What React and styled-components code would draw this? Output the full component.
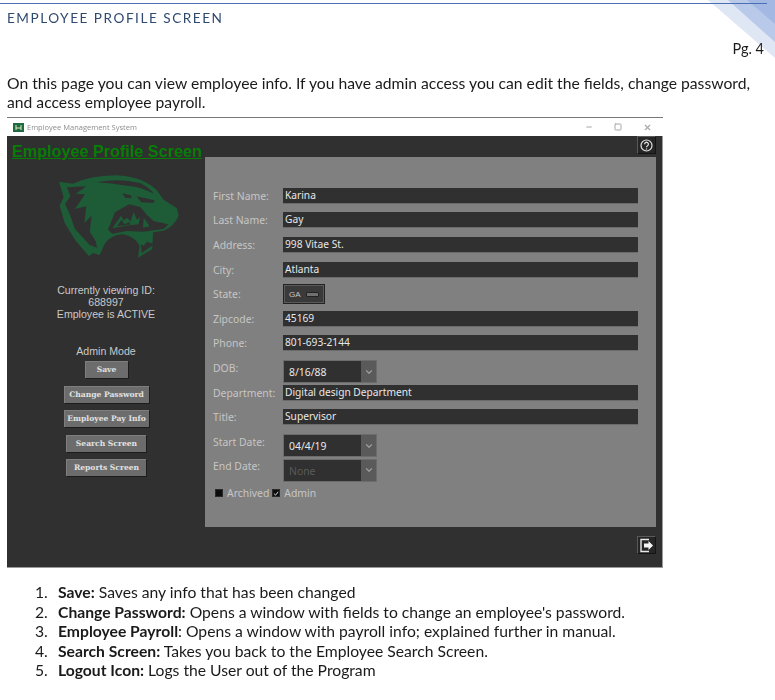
import React from 'react';
import styled, { createGlobalStyle } from 'styled-components';
import { ChevronDown, Minus, Square, X } from 'lucide-react';

const GlobalStyle = createGlobalStyle`
  html, body { margin: 0; padding: 0; background: #fff; }
  body { font-family: Lato, "Open Sans", sans-serif; }
`;

const Page = styled.div`
  position: relative;
  width: 775px;
  height: 700px;
  overflow: hidden;
  padding-top: 3px;
  box-sizing: border-box;
  filter: blur(0.3px);
`;

const Corner = styled.svg`
  position: absolute;
  top: 0;
  right: 0;
`;

const TopRule = styled.div`
  position: relative;
  width: 767px;
  height: 1px;
  background: #4a6fb5;
`;

const Heading = styled.h2`
  margin: 6px 0 0 7px;
  font-size: 13.6px;
  line-height: 16px;
  font-weight: 400;
  letter-spacing: 1.52px;
  color: #2f4a6f;
`;

const PageNo = styled.div`
  margin: 13px 11px 0 0;
  text-align: right;
  font-size: 14.5px;
  line-height: 19px;
  color: #1c1c1c;
  position: relative;
`;

const Intro = styled.p`
  margin: 16px 0 0 7px;
  font-size: 15.7px;
  line-height: 18.5px;
  white-space: nowrap;
  color: #1a1a1a;
`;

const Win = styled.div`
  margin: 6px 0 0 7px;
  width: 656px;
  height: 451px;
  display: flex;
  flex-direction: column;
  border-top: 1px solid #777;
  box-sizing: border-box;
`;

const TitleBar = styled.div`
  height: 18px;
  flex: none;
  display: flex;
  align-items: center;
  background: #fff;
  padding: 0 11px 0 6px;
  font-family: "Open Sans", sans-serif;
  font-size: 7.5px;
  color: #8d8d8d;
`;

const AppIcon = styled.svg`
  margin-right: 3px;
`;

const WinControls = styled.div`
  margin-left: auto;
  display: flex;
  align-items: center;
  gap: 21px;
  color: #a8a8a8;
`;

const WinBody = styled.div`
  flex: 1;
  display: grid;
  grid-template-columns: 198px 1fr;
  background: #303030;
  border-right: 1px solid #9a9a9a;
  border-bottom: 1px solid #9a9a9a;
`;

const Side = styled.div`
  display: flex;
  flex-direction: column;
  align-items: center;
  font-family: "Liberation Sans", Arial, sans-serif;
  color: #c9c9c9;
  font-size: 10.6px;
  line-height: 12px;
  text-align: center;
`;

const ScreenTitle = styled.h1`
  align-self: flex-start;
  margin: 5px 0 0 5px;
  font-family: "Liberation Sans", Arial, sans-serif;
  font-size: 16.2px;
  line-height: 21px;
  font-weight: 700;
  white-space: nowrap;
  color: #067d06;
  text-decoration: underline;
`;

const Logo = styled.svg`
  margin: 12px 0 0 25px;
  display: block;
`;

const Status = styled.div`
  margin-top: 26px;
`;

const AdminLabel = styled.div`
  margin-top: 25px;
  margin-bottom: 4px;
`;

const SideButton = styled.div`
  width: ${(p) => p.$w}px;
  height: 17px;
  box-sizing: border-box;
  margin-bottom: 7.6px;
  display: flex;
  align-items: center;
  justify-content: center;
  background: #6c6c6c;
  border-top: 1px solid #7e7e7e;
  border-left: 1px solid #7e7e7e;
  box-shadow: 1px 1px 0 #1c1c1c;
  font-family: "DejaVu Serif", serif;
  font-weight: 700;
  font-size: 7.6px;
  color: #e2e2e2;
  white-space: nowrap;
`;

const Main = styled.div`
  display: flex;
  flex-direction: column;
  padding-right: 6px;
`;

const IconRow = styled.div`
  height: ${(p) => p.$h}px;
  padding-top: ${(p) => p.$top}px;
  box-sizing: border-box;
  display: flex;
  justify-content: flex-end;
  align-items: flex-start;
`;

const IconButton = styled.div`
  width: 19px;
  height: 18px;
  display: flex;
  align-items: center;
  justify-content: center;
  background: #262626;
  border-top: 1px solid #5a5a5a;
  border-left: 1px solid #5a5a5a;
  border-bottom: 1px solid #141414;
  border-right: 1px solid #141414;
  box-sizing: border-box;
`;

const Panel = styled.div`
  height: 370px;
  background: #808080;
  padding: 26.5px 18px 0 8px;
  box-sizing: border-box;
  display: grid;
  grid-auto-rows: 24.6px;
  font-family: "Noto Sans", Tahoma, sans-serif;
`;

const Row = styled.div`
  display: flex;
  align-items: center;
  min-height: 0;
`;

const Label = styled.div`
  width: 70px;
  flex: none;
  font-size: 10.4px;
  color: #c6c6c6;
  white-space: nowrap;
`;

const TextValue = styled.div`
  flex: 1;
  height: 15px;
  line-height: 15px;
  background: #303030;
  padding-left: 2px;
  font-size: 10.2px;
  color: #e8e8e8;
  border-bottom: 1px solid #6a6a6a;
  box-sizing: content-box;
`;

const DateBox = styled.div`
  width: 94px;
  height: 23px;
  margin-top: 8px;
  display: flex;
  background: #303030;
  border: 1px solid #6c6c6c;
  box-sizing: border-box;
  font-size: 10.4px;
  color: ${(p) => (p.$off ? '#5a5a5a' : '#e8e8e8')};
`;

const DateText = styled.div`
  flex: 1;
  padding-left: 5px;
  line-height: 22px;
`;

const DateArrow = styled.div`
  width: 15px;
  background: #5a5a5a;
  color: #a0a0a0;
  display: flex;
  align-items: center;
  justify-content: center;
`;

const StateBox = styled.div`
  width: 42px;
  height: 20px;
  display: flex;
  align-items: center;
  gap: 5px;
  padding-left: 5px;
  box-sizing: border-box;
  background: #3a3a3a;
  border: 1px solid #232323;
  outline: 1px solid #5a5a5a;
  outline-offset: -2px;
  font-family: "Liberation Sans", Arial, sans-serif;
  font-size: 8px;
  color: #c8c8c8;
`;

const StateArrow = styled.div`
  width: 11px;
  height: 3px;
  background: #707070;
  border: 1px solid #222;
  border-radius: 1px;
`;

const Checks = styled.div`
  margin-top: 5px;
  padding-left: 2px;
  display: flex;
  align-items: center;
  font-size: 10.4px;
  color: #c6c6c6;
`;

const CheckBox = styled.div`
  width: 8px;
  height: 8px;
  flex: none;
  box-sizing: border-box;
  margin-right: 4px;
  background: #0c0c0c;
  border: 1px solid #2a2a2a;
  display: flex;
  align-items: center;
  justify-content: center;
`;

const CheckLabel = styled.span`
  margin-right: 3px;
`;

const Notes = styled.ol`
  margin: 15px 0 0;
  padding: 0 0 0 35px;
  list-style: none;
  counter-reset: note;
  font-size: 15.7px;
  line-height: 19.5px;
  color: #1a1a1a;
  white-space: nowrap;

  li {
    counter-increment: note;
  }

  li::before {
    content: counter(note) ".";
    display: inline-block;
    width: 23px;
  }
`;

const notes = [
  ['Save:', ' Saves any info that has been changed'],
  ['Change Password:', " Opens a window with fields to change an employee's password."],
  ['Employee Payroll', ': Opens a window with payroll info; explained further in manual.'],
  ['Search Screen:', ' Takes you back to the Employee Search Screen.'],
  ['Logout Icon:', ' Logs the User out of the Program'],
];

function Field({ label, value }) {
  return (
    <Row>
      <Label>{label}</Label>
      <TextValue>{value}</TextValue>
    </Row>
  );
}

function DateField({ label, value, off }) {
  return (
    <Row>
      <Label>{label}</Label>
      <DateBox $off={off}>
        <DateText>{value}</DateText>
        <DateArrow><ChevronDown size={10} strokeWidth={2.6} /></DateArrow>
      </DateBox>
    </Row>
  );
}

function BadgerLogo() {
  const g = '#1d5c37';
  const d = '#303030';
  return (
    <Logo width="122" height="84" viewBox="55 25 366 252">
      <path fill={g} d="M58 48 L100 54 Q150 30 230 29 Q305 32 350 72 L372 102 L412 128 L417 150 Q405 180 372 195 L340 200 L338 250 L295 276 L300 240 Q285 212 250 206 Q212 208 195 235 L180 268 L160 262 L148 272 L108 225 L75 172 L60 120 L72 95 Z" />
      <path fill={d} d="M82 65 L140 62 L108 84 L136 86 L106 130 L140 122 L134 172 L156 150 L150 198 L168 226 L172 246 L150 238 L106 190 L90 145 L76 115 L92 92 Z" />
      <path fill={d} d="M170 50 Q240 36 300 52 Q330 66 342 84 Q300 62 262 60 Q215 52 170 50 Z" />
      <path fill={d} d="M248 82 L276 90 L274 98 L256 96 Z" />
      <path fill={d} d="M290 92 L345 104 L342 112 L305 110 Z" />
      <path fill={d} d="M205 192 L226 140 L268 116 L302 124 L322 148 L342 166 L386 176 L372 190 L312 198 L262 196 L218 204 Z" />
      <path fill={g} d="M218 188 L244 150 L252 164 L264 156 L272 168 L282 140 L292 162 L302 154 L296 176 L258 180 Z" />
      <path fill={d} d="M232 182 L246 162 L254 176 L268 170 L274 176 Z" />
      <path fill={g} d="M312 156 L330 182 L310 186 Z" />
      <path fill={d} d="M306 262 L344 236 L322 228 L312 240 L304 236 Z" />
    </Logo>
  );
}

export default function App() {
  return (
    <Page>
      <GlobalStyle />
      <Corner width="70" height="60" viewBox="0 0 70 60">
        <polygon points="3,0 70,0 70,58" fill="#dfe6f4" />
        <polygon points="23,0 70,0 70,42" fill="#b9c9e9" />
        <polygon points="42,0 70,0 70,24" fill="#a3b8e2" />
      </Corner>
      <TopRule />
      <Heading>EMPLOYEE PROFILE SCREEN</Heading>
      <PageNo>Pg. 4</PageNo>
      <Intro>
        On this page you can view employee info. If you have admin access you can edit the fields, change password,
        <br />
        and access employee payroll.
      </Intro>

      <Win>
        <TitleBar>
          <AppIcon width="11" height="9" viewBox="0 0 11 9">
            <rect width="11" height="9" fill="#1e6b3f" />
            <path d="M3 2v5M8 2v5M3 5h5" stroke="#dfe8c0" strokeWidth="1" />
          </AppIcon>
          Employee Management System
          <WinControls>
            <Minus size={8} strokeWidth={3} />
            <Square size={8} strokeWidth={3} />
            <X size={9} strokeWidth={3} />
          </WinControls>
        </TitleBar>
        <WinBody>
          <Side>
            <ScreenTitle>Employee Profile Screen</ScreenTitle>
            <BadgerLogo />
            <Status>
              Currently viewing ID:<br />
              688997<br />
              Employee is ACTIVE
            </Status>
            <AdminLabel>Admin Mode</AdminLabel>
            <SideButton $w={43}>Save</SideButton>
            <SideButton $w={85}>Change Password</SideButton>
            <SideButton $w={85}>Employee Pay Info</SideButton>
            <SideButton $w={80}>Search Screen</SideButton>
            <SideButton $w={80}>Reports Screen</SideButton>
          </Side>
          <Main>
            <IconRow $h={21} $top={0}>
              <IconButton>
                <svg width="13" height="13" viewBox="0 0 13 13" fill="none" stroke="#e4e4e4" strokeWidth="1.2">
                  <circle cx="6.5" cy="6.5" r="5.5" />
                  <path d="M4.6 5.2a1.9 1.9 0 1 1 2.9 1.6c-.7.4-1 .8-1 1.5" strokeWidth="1.3" />
                  <path d="M6.5 9.4v1.1" strokeWidth="1.3" />
                </svg>
              </IconButton>
            </IconRow>
            <Panel>
              <Field label="First Name:" value="Karina" />
              <Field label="Last Name:" value="Gay" />
              <Field label="Address:" value="998 Vitae St." />
              <Field label="City:" value="Atlanta" />
              <Row>
                <Label>State:</Label>
                <StateBox>GA<StateArrow /></StateBox>
              </Row>
              <Field label="Zipcode:" value="45169" />
              <Field label="Phone:" value="801-693-2144" />
              <DateField label="DOB:" value="8/16/88" />
              <Field label="Department:" value="Digital design Department" />
              <Field label="Title:" value="Supervisor" />
              <DateField label="Start Date:" value="04/4/19" />
              <DateField label="End Date:" value="None" off />
              <Checks>
                <CheckBox />
                <CheckLabel>Archived</CheckLabel>
                <CheckBox>
                  <svg width="7" height="7" viewBox="0 0 7 7" fill="none" stroke="#ddd" strokeWidth="1.1">
                    <path d="M1 3.5l2 2 3-4" />
                  </svg>
                </CheckBox>
                <span>Admin</span>
              </Checks>
            </Panel>
            <IconRow $h={40} $top={9}>
              <IconButton>
                <svg width="15" height="15" viewBox="0 0 15 15">
                  <path d="M10 1.5H2v12h8" fill="none" stroke="#e8e8e8" strokeWidth="1.4" />
                  <path d="M5 5.6h4.5V3L14 7.5 9.5 12V9.4H5z" fill="#f6f6f6" />
                </svg>
              </IconButton>
            </IconRow>
          </Main>
        </WinBody>
      </Win>

      <Notes>
        {notes.map(([term, rest]) => (
          <li key={term}><strong>{term}</strong>{rest}</li>
        ))}
      </Notes>
    </Page>
  );
}
